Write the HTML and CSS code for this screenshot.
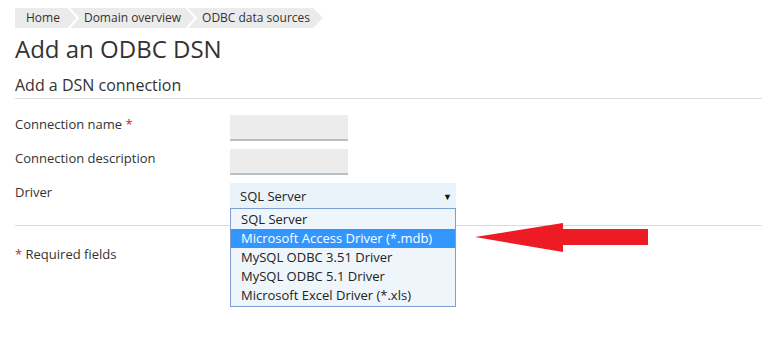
FILE: index.html
```html
<!DOCTYPE html>
<html>
<head>
<meta charset="utf-8">
<link rel="stylesheet" href="styles.css">
</head>
<body>
<div class="page">
  <nav class="crumbs">
    <span class="crumb first">Home</span>
    <svg class="sep" width="14" height="20" viewBox="0 0 14 20"><polyline points="2,-1 12,10 2,21" fill="none" stroke="#fff" stroke-width="2"/></svg>
    <span class="crumb">Domain overview</span>
    <svg class="sep" width="14" height="20" viewBox="0 0 14 20"><polyline points="2,-1 12,10 2,21" fill="none" stroke="#fff" stroke-width="2"/></svg>
    <span class="crumb last">ODBC data sources</span>
    <svg class="tip" width="10" height="20" viewBox="0 0 10 20"><polygon points="0,0 10,10 0,20" fill="#ebebeb"/></svg>
  </nav>
  <h1 class="title">Add an ODBC DSN</h1>
  <h2 class="subtitle">Add a DSN connection</h2>
  <div class="form">
    <div class="label">Connection name <span class="req">*</span></div>
    <div class="control"><div class="input"></div></div>
    <div class="label">Connection description</div>
    <div class="control"><div class="input"></div></div>
    <div class="label">Driver</div>
    <div class="control">
      <div class="select"><span>SQL Server</span><span class="caret">&#9660;</span></div>
      <ul class="dropdown">
        <li>SQL Server</li>
        <li class="active">Microsoft Access Driver (*.mdb)</li>
        <li>MySQL ODBC 3.51 Driver</li>
        <li>MySQL ODBC 5.1 Driver</li>
        <li>Microsoft Excel Driver (*.xls)</li>
      </ul>
    </div>
  </div>
  <div class="footer"><span class="req">*</span> Required fields</div>
  <svg class="arrow" width="180" height="32" viewBox="474 222 180 32"><polygon points="475,237 563,223 563,229 648,229 648,245 563,245 563,252" fill="#ed1c24"/></svg>
</div>
</body>
</html>
```
FILE: styles.css
```css
html, body {
  margin: 0;
  padding: 0;
  background: #fff;
}
body {
  font-family: "Open Sans", "Liberation Sans", sans-serif;
  color: #333;
}
.page {
  position: relative;
  box-sizing: border-box;
  min-height: 337px;
  padding: 8px 19px 0 15px;
}
.crumbs {
  display: flex;
  align-items: center;
  height: 20px;
  font-size: 12px;
  color: #333;
}
.crumb {
  display: flex;
  align-items: center;
  height: 20px;
  background: #ebebeb;
  padding: 0 3px 0 4px;
  line-height: 20px;
}
.crumb.first {
  padding-left: 11px;
  padding-right: 6px;
}
.crumb.last {
  padding-right: 3px;
}
.sep {
  display: block;
  background: #ebebeb;
}
.tip {
  display: block;
}
.title {
  font-size: 24px;
  font-weight: 400;
  margin: 4px 0 0 0;
  line-height: 33px;
  color: #333;
}
.subtitle {
  font-size: 16px;
  font-weight: 400;
  margin: 9px 0 0 0;
  line-height: 22px;
  padding-bottom: 2px;
  border-bottom: 1px solid #dcdcdc;
  color: #333;
}
.form {
  display: grid;
  grid-template-columns: 215px 1fr;
  row-gap: 8px;
  margin-top: 16px;
  padding-bottom: 16px;
  border-bottom: 1px solid #dcdcdc;
  font-size: 13px;
}
.label {
  line-height: 18px;
}
.req {
  color: #c0262d;
}
.control {
  position: relative;
}
.input {
  width: 118px;
  height: 24px;
  background: #ececec;
  border-bottom: 2px solid #b7c0c7;
}
.select {
  box-sizing: border-box;
  width: 226px;
  height: 26px;
  background: #eaf3fa;
  display: flex;
  align-items: center;
  justify-content: space-between;
  padding: 0 4px 0 10px;
  font-size: 13px;
  color: #222;
}
.caret {
  font-size: 9px;
  color: #111;
}
.dropdown {
  position: absolute;
  top: 25px;
  left: 0;
  box-sizing: border-box;
  width: 226px;
  margin: 0;
  padding: 1px 0;
  list-style: none;
  background: #eef5fb;
  border: 1px solid #7f9ed3;
  font-size: 13px;
  color: #222;
  z-index: 2;
}
.dropdown li {
  height: 19px;
  line-height: 19px;
  padding-left: 10px;
}
.dropdown li.active {
  background: #3396ff;
  color: #fff;
}
.footer {
  font-size: 13px;
  margin-top: 19px;
  line-height: 18px;
}
.arrow {
  position: absolute;
  left: 474px;
  top: 222px;
}
```
